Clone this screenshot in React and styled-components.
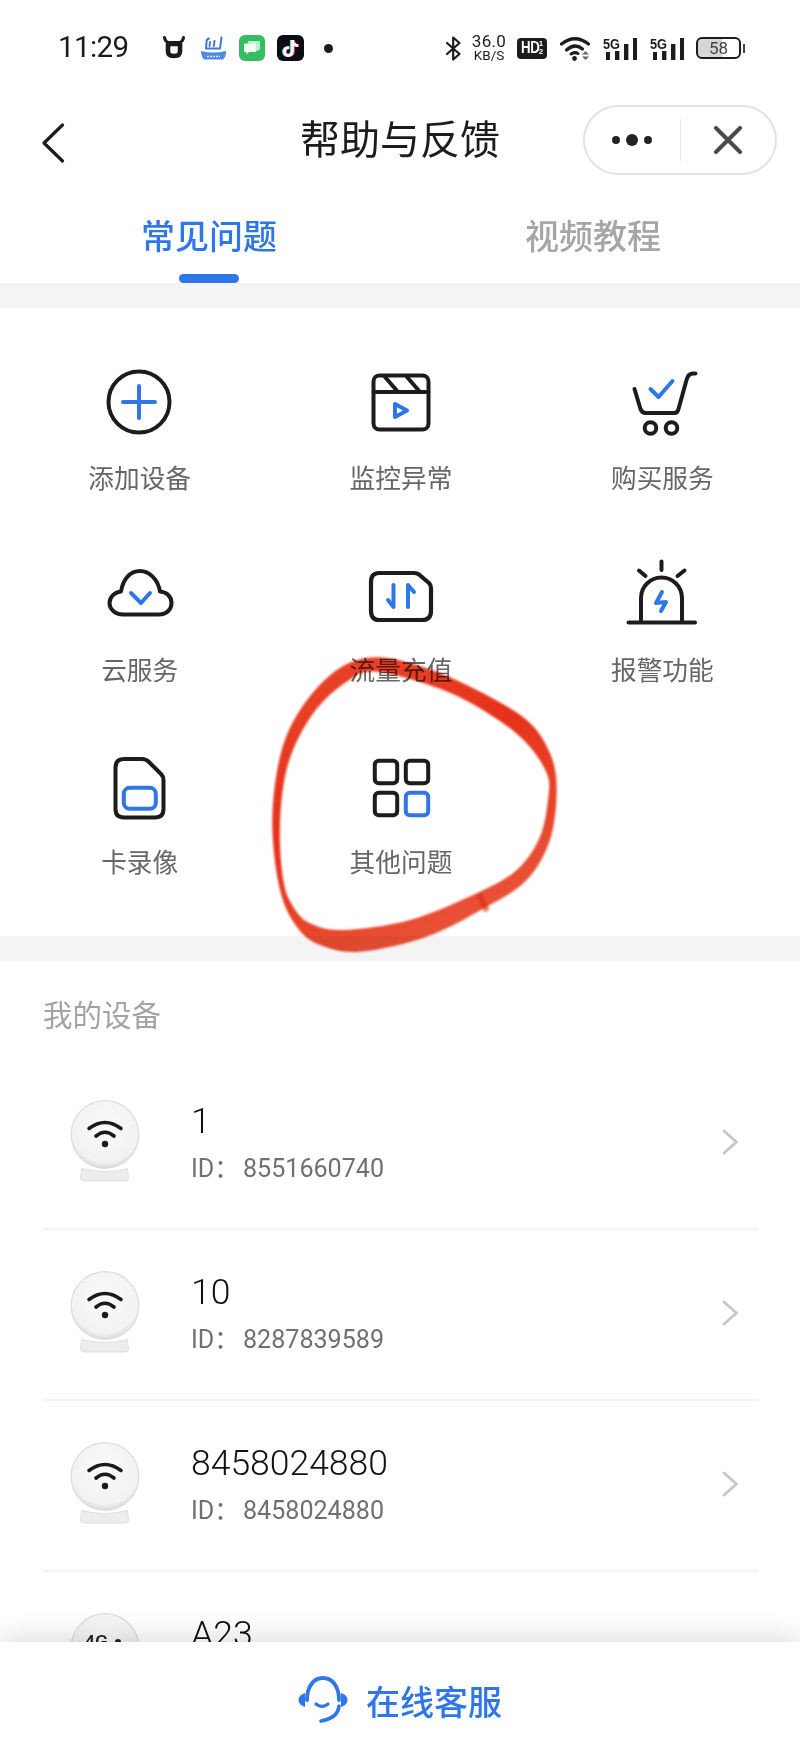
import React from "react"
import styled, { createGlobalStyle } from "styled-components"
import { FaTiktok } from "react-icons/fa"

const BLUE = "#2f76e8"
const INK = "#1c1c1c"

const GlobalStyle = createGlobalStyle`
  html, body {
    margin: 0;
    padding: 0;
    background: #fff;
  }
  body {
    font-family: "Noto Sans CJK SC", "Noto Sans", sans-serif;
  }
`

const Page = styled.div`
  position: relative;
  width: 800px;
  height: 1759px;
  overflow: hidden;
  display: flex;
  flex-direction: column;
  background: #fff;
`

/* ---------- status bar ---------- */
const StatusBar = styled.div`
  height: 96px;
  flex: none;
  display: flex;
  align-items: center;
  justify-content: space-between;
  padding: 0 55px 0 58px;
`
const StatusGroup = styled.div`
  display: flex;
  align-items: center;
`
const Clock = styled.span`
  width: 69px;
  font-family: Roboto, sans-serif;
  font-size: 29.5px;
  line-height: 1;
  letter-spacing: -0.6px;
  color: ${INK};
  white-space: nowrap;
`
const Glyph = styled.svg`
  display: block;
  flex: none;
  margin-left: ${p => p.$ml || 0}px;
`
const BackIcon = styled(Glyph)`
  margin-top: 6px;
`
const AppTile = styled.div`
  position: relative;
  flex: none;
  width: ${p => p.$w}px;
  height: 26px;
  margin-left: ${p => p.$ml}px;
  border-radius: 6px;
  background: ${p => p.$bg};
  display: flex;
  align-items: center;
  justify-content: center;
`
const TikLayer = styled(FaTiktok)`
  position: absolute;
  width: 17px;
  height: 17px;
  left: ${p => p.$x}px;
  top: ${p => p.$y}px;
  color: ${p => p.$c};
`
const Dot = styled.span`
  flex: none;
  width: 9px;
  height: 9px;
  margin-left: 20px;
  border-radius: 50%;
  background: ${INK};
`
const Speed = styled.div`
  flex: none;
  width: 36px;
  margin-left: 10px;
  display: flex;
  flex-direction: column;
  align-items: center;
  font-family: Roboto, sans-serif;
  color: ${INK};
  line-height: 1;
`
const SpeedValue = styled.span`
  font-size: 17px;
  letter-spacing: 0.3px;
  line-height: 15px;
`
const SpeedUnit = styled.span`
  font-size: 13.5px;
  line-height: 13px;
`
const HdBadge = styled.div`
  flex: none;
  width: 30px;
  height: 21px;
  margin-left: 10px;
  border-radius: 4px;
  background: ${INK};
  color: #fff;
  display: flex;
  align-items: center;
  justify-content: center;
  font-family: "Liberation Sans", sans-serif;
  font-weight: 700;
`
const HdText = styled.span`
  display: inline-block;
  width: 17px;
  font-size: 17px;
  letter-spacing: -0.5px;
  transform: scaleX(0.78);
  transform-origin: left center;
`
const HdSub = styled.span`
  display: flex;
  flex-direction: column;
  margin-left: 1px;
  font-size: 8px;
  line-height: 8.5px;
`
const Battery = styled.div`
  flex: none;
  position: relative;
  width: 45px;
  height: 22px;
  margin-left: 12px;
  box-sizing: border-box;
  border: 2px solid ${INK};
  border-radius: 6px;
  overflow: hidden;
  display: flex;
  align-items: center;
  justify-content: center;
  font-family: Roboto, sans-serif;
  font-size: 17px;
  color: #444;
  background: linear-gradient(90deg, #d6d6d6 0 58%, #fff 58%);
`
const BatteryNub = styled.span`
  flex: none;
  width: 2px;
  height: 9px;
  margin-left: 2px;
  background: #444;
`

/* ---------- header ---------- */
const NavBar = styled.div`
  position: relative;
  height: 88px;
  flex: none;
  display: flex;
  align-items: center;
  justify-content: space-between;
  padding: 0 23px 0 41px;
`
const Title = styled.div`
  position: absolute;
  left: 0;
  right: 0;
  margin-top: -6px;
  text-align: center;
  font-size: 40px;
  line-height: 48px;
  color: ${INK};
`
const Capsule = styled.div`
  width: 194px;
  height: 70px;
  box-sizing: border-box;
  border: 2px solid #e3e3e3;
  border-radius: 35px;
  display: flex;
  align-items: center;
  background: #fff;
  z-index: 1;
`
const CapsulePart = styled.div`
  flex: 1;
  height: 42px;
  display: flex;
  align-items: center;
  justify-content: center;
  border-left: ${p => (p.$divided ? "1.5px solid #e8e8e8" : "none")};
`
const Tabs = styled.div`
  flex: none;
  height: 99px;
  display: grid;
  grid-template-columns: 1fr 1fr;
  padding: 0 15px 0 17px;
`
const Tab = styled.div`
  display: flex;
  flex-direction: column;
  align-items: center;
  justify-content: flex-end;
  font-size: 34px;
  font-weight: 500;
  line-height: 50px;
  color: ${p => (p.$active ? BLUE : "#a6a6a6")};
`
const TabMark = styled.span`
  display: block;
  width: 60px;
  height: 9px;
  margin-top: 14px;
  border-radius: 5px;
  background: ${p => (p.$active ? BLUE : "transparent")};
`
const Band = styled.div`
  flex: none;
  height: 25px;
  background: #f4f4f5;
`

/* ---------- feature grid ---------- */
const FeatureGrid = styled.div`
  flex: none;
  display: grid;
  grid-template-columns: repeat(3, 1fr);
  row-gap: 64px;
  padding: 59px 7px 57px 9px;
`
const Feature = styled.div`
  display: flex;
  flex-direction: column;
  align-items: center;
`
const FeatureLabel = styled.span`
  margin-top: 20px;
  font-size: 25.7px;
  line-height: 36px;
  color: #666;
`
const I = { fill: "none", stroke: INK, strokeWidth: 4, strokeLinecap: "round", strokeLinejoin: "round" }
const B = { ...I, stroke: BLUE }

const featureIcons = {
  add: (
    <>
      <circle cx="35" cy="35" r="30.5" {...I} />
      <path d="M19 35H51M35 19V51" {...B} />
    </>
  ),
  video: (
    <>
      <rect x="8.5" y="8.5" width="55" height="54" rx="6" {...I} />
      <path d="M8.5 25H63.5M20 10L33 25M42 10L55 25" {...I} />
      <path d="M30 37L42 43.5L30 50Z" {...B} />
    </>
  ),
  cart: (
    <g transform="translate(0.5 0)">
      <path d="M8 22L14 42Q15.5 46 19 46H48Q51 46 52 42L60 13Q61.5 7 66 6.5H69" {...I} />
      <circle cx="24" cy="61" r="5.8" {...I} />
      <circle cx="45" cy="61" r="5.8" {...I} />
      <path d="M24 22L32 30L46 14" {...B} />
    </g>
  ),
  cloud: (
    <g transform="translate(-1 0)">
      <path d="M20 55.5H56C64 55.5 68.5 50 68.5 44C68.5 37 63 33 57 32.5C55 20 46 12 37 12C27 12 20 20 18 32.5C12 33 6.5 38 6.5 44C6.5 50 12 55.5 20 55.5Z" {...I} />
      <path d="M28 34L38 44L47 34" {...B} />
    </g>
  ),
  flow: (
    <g transform="translate(-1 0)">
      <path d="M15 14H50Q53 14 55 15.5L65 24Q67 26 67 29V52Q67 61 58 61H15Q7 61 7 52V23Q7 14 15 14Z" {...I} strokeWidth="4.2" />
      <path d="M29.5 26V48L24 41" {...B} />
      <path d="M44 48V26L50 33" {...B} />
    </g>
  ),
  alarm: (
    <g transform="translate(-1 0)">
      <path d="M16 63V39A20.5 20.5 0 0 1 57 39V63" {...I} />
      <path d="M3.5 63.5H70M36.5 2.5V11M14 11.5L20.5 17M59.5 11.5L52.5 17" {...I} />
      <path d="M37 33L31 44L41 43L36 52" {...B} />
    </g>
  ),
  card: (
    <g transform="translate(-1 0)">
      <path d="M21 8H39Q43 8 46 11L58 23Q60.5 25.5 60.5 29V58Q60.5 66.5 52 66.5H21Q12.5 66.5 12.5 58V16.5Q12.5 8 21 8Z" {...I} />
      <rect x="20.8" y="36.8" width="32" height="21" rx="6" {...B} />
    </g>
  ),
  more: (
    <g transform="translate(-1 0)">
      <rect x="10.8" y="9.8" width="22.4" height="22.4" rx="4" {...I} />
      <rect x="41.8" y="9.8" width="22.4" height="22.4" rx="4" {...I} />
      <rect x="10.8" y="41.8" width="22.4" height="22.4" rx="4" {...I} />
      <rect x="41.8" y="41.8" width="22.4" height="22.4" rx="4" {...B} />
    </g>
  ),
}

const features = [
  ["add", "添加设备"],
  ["video", "监控异常"],
  ["cart", "购买服务"],
  ["cloud", "云服务"],
  ["flow", "流量充值"],
  ["alarm", "报警功能"],
  ["card", "卡录像"],
  ["more", "其他问题"],
]

/* ---------- devices ---------- */
const DeviceSection = styled.div`
  flex: 1;
  min-height: 0;
  overflow: hidden;
  padding: 32px 42px 0 43px;
`
const SectionTitle = styled.div`
  font-size: 29.5px;
  line-height: 40px;
  color: #a3a3a3;
  margin-bottom: 26px;
`
const DeviceRow = styled.div`
  height: 171px;
  box-sizing: border-box;
  border-bottom: 2px solid #f3f3f3;
  display: flex;
  align-items: flex-start;
  padding: 41px 19px 0 27px;
`
const DeviceText = styled.div`
  margin-left: 51px;
  margin-top: -1px;
`
const DeviceName = styled.div`
  font-family: Roboto, sans-serif;
  font-size: 35.5px;
  font-weight: 300;
  line-height: 44px;
  color: #111;
`
const DeviceId = styled.div`
  margin-top: 9px;
  font-family: Roboto, "Noto Sans CJK SC", sans-serif;
  font-size: 25.1px;
  line-height: 34px;
  color: #707070;
  white-space: pre;
`
const DeviceIdLabel = styled.span`
  display: inline-block;
  width: 52px;
`
const Arrow = styled.svg`
  margin-left: auto;
  margin-top: 29px;
`
const devices = [
  { name: "1", id: "8551660740" },
  { name: "10", id: "8287839589" },
  { name: "8458024880", id: "8458024880" },
  { name: "A23", cellular: true },
]

const CameraIcon = ({ cellular }) => (
  <Glyph width="70" height="82" viewBox="0 0 70 82">
    <defs>
      <radialGradient id="ball" cx="50%" cy="40%" r="60%">
        <stop offset="0" stopColor="#fafafa" />
        <stop offset="0.85" stopColor="#f2f2f2" />
        <stop offset="1" stopColor="#d9d9d9" />
      </radialGradient>
    </defs>
    <path d="M11.5 68.5Q24 71.5 35 71.5Q46 71.5 57.5 68.5L58.5 78Q58.5 81 55 81H14Q10.5 81 10.5 78Z" fill="#ececec" stroke="#e0e0e0" />
    <circle cx="35" cy="34.5" r="33.8" fill="url(#ball)" stroke="#dcdcdc" strokeWidth="1.2" />
    {cellular ? (
      <>
        <text x="26" y="35" fontFamily="Roboto, sans-serif" fontSize="19" fontWeight="500" textAnchor="middle" fill="#222">4G</text>
        <circle cx="48" cy="29" r="3" fill="#222" />
      </>
    ) : (
      <>
        <path d="M19 28.5Q35 16.5 51 28.5" fill="none" stroke="#1a1a1a" strokeWidth="3.6" strokeLinecap="round" />
        <path d="M26 36Q35 28.5 44 36" fill="none" stroke="#1a1a1a" strokeWidth="3.6" strokeLinecap="round" />
        <circle cx="35" cy="44" r="3.2" fill="#1a1a1a" />
      </>
    )}
  </Glyph>
)

/* ---------- footer ---------- */
const Footer = styled.div`
  position: relative;
  z-index: 2;
  flex: none;
  height: 117px;
  display: flex;
  align-items: flex-start;
  justify-content: center;
  padding-top: 34px;
  box-sizing: border-box;
  gap: 18px;
  background: #fff;
  box-shadow: 0 -3px 28px rgba(0, 0, 0, 0.16);
`
const FooterText = styled.span`
  font-size: 34px;
  font-weight: 500;
  line-height: 50px;
  color: ${BLUE};
`

/* ---------- hand drawn ring on top of the shot ---------- */
const Ring = styled.svg`
  position: absolute;
  left: 260px;
  top: 650px;
  z-index: 3;
  pointer-events: none;
  mix-blend-mode: multiply;
  filter: blur(0.9px);
`

// closed smooth curve through points, catmull-rom to bezier
const smooth = pts => {
  const n = pts.length
  let d = `M${pts[0][0]} ${pts[0][1]}`
  for (let i = 0; i < n; i++) {
    const a = pts[(i - 1 + n) % n]
    const b = pts[i]
    const c = pts[(i + 1) % n]
    const e = pts[(i + 2) % n]
    d += `C${b[0] + (c[0] - a[0]) / 6} ${b[1] + (c[1] - a[1]) / 6} ${c[0] - (e[0] - b[0]) / 6} ${c[1] - (e[1] - b[1]) / 6} ${c[0]} ${c[1]}`
  }
  return d + "Z"
}
// traced from the reference, in 3x crop coordinates
const toPage = ([x, y]) => [+(x / 3 + 60 - 260).toFixed(1), +(y / 3 + 640 - 650).toFixed(1)]
const outer = [[950,52],[1100,85],[1250,150],[1400,240],[1470,340],[1490,450],[1470,600],[1400,720],[1280,800],[1100,890],[900,935],[780,915],[710,860],[660,750],[637,550],[660,350],[720,210],[830,90]].map(toPage)
const inner = [[950,95],[1150,150],[1300,230],[1400,310],[1460,400],[1465,470],[1440,590],[1370,690],[1250,760],[1050,840],[850,870],[750,850],[700,800],[670,720],[660,550],[685,370],[760,220],[860,125]].map(toPage)

const RedRing = () => (
  <Ring width="310" height="320" viewBox="0 0 310 320">
    <defs>
      <linearGradient id="ringFill" x1="0.1" y1="0" x2="0.6" y2="1">
        <stop offset="0" stopColor="#e9452a" />
        <stop offset="0.45" stopColor="#e6321a" />
        <stop offset="1" stopColor="#e9553a" />
      </linearGradient>
    </defs>
    <path d={smooth(outer) + smooth(inner)} fillRule="evenodd" fill="url(#ringFill)" />
    <path d="M219 244L227 261" stroke="#d92a12" strokeWidth="6" strokeOpacity="0.6" />
  </Ring>
)

const FiveG = ({ ml }) => (
  <Glyph $ml={ml} width="34" height="23" viewBox="0 0 34 23">
    <text x="0" y="12" fontFamily="Liberation Sans, sans-serif" fontSize="15" fontWeight="700" textLength="17" lengthAdjust="spacingAndGlyphs" fill={INK}>5G</text>
    <rect x="3" y="15" width="4" height="8" fill={INK} />
    <rect x="12" y="14" width="4.4" height="9" fill={INK} />
    <rect x="21" y="7" width="4.4" height="16" fill={INK} />
    <rect x="30" y="1" width="4" height="22" fill={INK} />
  </Glyph>
)

export default function App() {
  return (
    <Page>
      <GlobalStyle />
      <StatusBar>
        <StatusGroup>
          <Clock>11:29</Clock>
          <Glyph $ml={36} width="22" height="24" viewBox="0 0 22 24">
            <path d="M1.5 1.5Q2 5 5 6.5H17Q20 5 20.5 1.5" fill="none" stroke={INK} strokeWidth="3" strokeLinecap="round" />
            <path d="M5 8H17V15.5Q17 20 11 20Q5 20 5 15.5Z" fill="none" stroke={INK} strokeWidth="4.6" strokeLinejoin="round" />
          </Glyph>
          <Glyph $ml={15} width="27" height="24" viewBox="0 0 27 24">
            <path d="M9 2.5Q6.5 3 6.5 6L6 12.5H20L21.5 1.5M14.5 5L13.8 10M10 6L9.6 10" fill="none" stroke="#3f78dc" strokeWidth="2" strokeLinecap="round" strokeLinejoin="round" />
            <path d="M1 15Q13 18 26 15Q26.5 20 23 23.5H4Q1 20 1 15Z" fill="#4f8ae8" />
            <path d="M7 20.5H20" stroke="#dce8fb" strokeWidth="1.5" strokeDasharray="2 1" />
          </Glyph>
          <AppTile $ml={12} $w={26} $bg="#35bd62">
            <Glyph width="18" height="16" viewBox="0 0 18 16">
              <path d="M5 1H16Q17 1 17 2V9Q17 10 16 10H15V12L13 10H7Z" fill="#bff0cd" />
              <path d="M2 3.5H12Q13 3.5 13 4.5V11Q13 12 12 12H6L3.5 14.5V12H2Q1 12 1 11V4.5Q1 3.5 2 3.5Z" fill="#eefbf2" />
            </Glyph>
          </AppTile>
          <AppTile $ml={12} $w={27} $bg="#0c0c12">
            <TikLayer $x={4} $y={5} $c="#25f4ee" />
            <TikLayer $x={6} $y={5} $c="#fe2c55" />
            <TikLayer $x={5} $y={4.5} $c="#fff" />
          </AppTile>
          <Dot />
        </StatusGroup>
        <StatusGroup>
          <Glyph width="15" height="25" viewBox="0 0 15 25">
            <path d="M1 7L13.5 18L7.2 23.5V1.5L13.5 7L1 18" fill="none" stroke={INK} strokeWidth="2.2" strokeLinejoin="round" strokeLinecap="round" />
          </Glyph>
          <Speed>
            <SpeedValue>36.0</SpeedValue>
            <SpeedUnit>KB/S</SpeedUnit>
          </Speed>
          <HdBadge>
            <HdText>HD</HdText>
            <HdSub>
              <span>1</span>
              <span>2</span>
            </HdSub>
          </HdBadge>
          <Glyph $ml={13} width="30" height="25" viewBox="0 0 30 25">
            <path d="M1.5 8Q15 -2.5 28.5 8" fill="none" stroke={INK} strokeWidth="3.2" strokeLinecap="round" />
            <path d="M6.5 14Q15 6.5 22.5 13" fill="none" stroke={INK} strokeWidth="3.2" strokeLinecap="round" />
            <path d="M11 18Q14.5 15.5 18 17.5" fill="none" stroke={INK} strokeWidth="3" strokeLinecap="round" />
            <circle cx="14.5" cy="22.5" r="2.4" fill={INK} />
            <path d="M22 18.5L25.5 15L29 18.5ZM22 20.5L25.5 24L29 20.5Z" fill="#666" />
          </Glyph>
          <FiveG ml={13} />
          <FiveG ml={13} />
          <Battery>58</Battery>
          <BatteryNub />
        </StatusGroup>
      </StatusBar>

      <NavBar>
        <BackIcon width="24" height="40" viewBox="0 0 24 40">
          <path d="M21.5 2L3 20L21.5 38" fill="none" stroke={INK} strokeWidth="3.2" strokeLinecap="round" strokeLinejoin="round" />
        </BackIcon>
        <Title>帮助与反馈</Title>
        <Capsule>
          <CapsulePart>
            <Glyph width="42" height="14" viewBox="0 0 42 14">
              <circle cx="5" cy="7" r="4" fill="#222" />
              <circle cx="21" cy="7" r="6" fill="#222" />
              <circle cx="37" cy="7" r="4" fill="#222" />
            </Glyph>
          </CapsulePart>
          <CapsulePart $divided>
            <Glyph width="28" height="28" viewBox="0 0 28 28">
              <path d="M2 2L26 26M26 2L2 26" fill="none" stroke="#4a4a4a" strokeWidth="4" strokeLinecap="round" />
            </Glyph>
          </CapsulePart>
        </Capsule>
      </NavBar>

      <Tabs>
        <Tab $active>
          常见问题
          <TabMark $active />
        </Tab>
        <Tab>
          视频教程
          <TabMark />
        </Tab>
      </Tabs>
      <Band />

      <FeatureGrid>
        {features.map(([icon, label]) => (
          <Feature key={icon}>
            <Glyph width="72" height="72" viewBox="0 0 72 72">
              {featureIcons[icon]}
            </Glyph>
            <FeatureLabel>{label}</FeatureLabel>
          </Feature>
        ))}
      </FeatureGrid>
      <Band />

      <DeviceSection>
        <SectionTitle>我的设备</SectionTitle>
        {devices.map(d => (
          <DeviceRow key={d.name}>
            <CameraIcon cellular={d.cellular} />
            <DeviceText>
              <DeviceName>{d.name}</DeviceName>
              {d.id && (
                <DeviceId>
                  <DeviceIdLabel>ID：</DeviceIdLabel>
                  {d.id}
                </DeviceId>
              )}
            </DeviceText>
            <Arrow width="17" height="26" viewBox="0 0 17 26">
              <path d="M2 2L14.5 13L2 24" fill="none" stroke="#c6c6c6" strokeWidth="2.8" strokeLinecap="round" strokeLinejoin="round" />
            </Arrow>
          </DeviceRow>
        ))}
      </DeviceSection>

      <Footer>
        <Glyph width="50" height="48" viewBox="0 0 50 48">
          <path d="M9 24C9 10 16 2 25 2C34 2 41 10 41 24" fill="none" stroke={BLUE} strokeWidth="3.8" strokeLinecap="round" />
          <path d="M7 17V31Q0.5 29 0.5 24Q0.5 19 7 17ZM43 17V31Q49.5 29 49.5 24Q49.5 19 43 17Z" fill={BLUE} />
          <path d="M18 28Q24 33 30 28" fill="none" stroke={BLUE} strokeWidth="3.2" strokeLinecap="round" />
          <path d="M41 30Q40 42 23 45" fill="none" stroke={BLUE} strokeWidth="3.6" strokeLinecap="round" />
        </Glyph>
        <FooterText>在线客服</FooterText>
      </Footer>

      <RedRing />
    </Page>
  )
}
